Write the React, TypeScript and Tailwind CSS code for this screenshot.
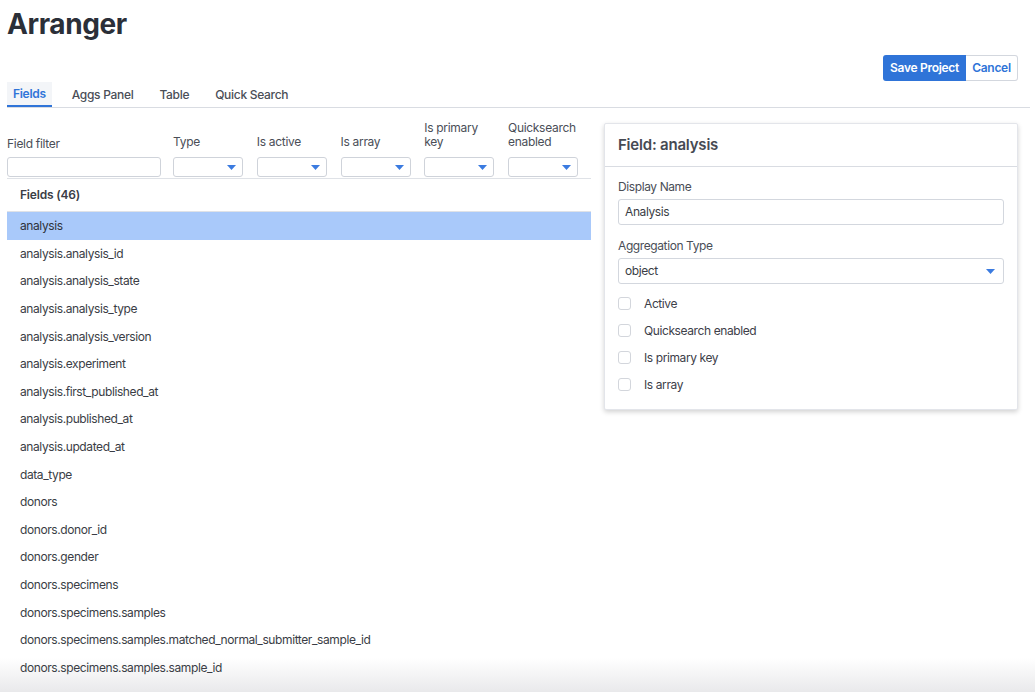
import React from 'react';

const fields = [
  'analysis',
  'analysis.analysis_id',
  'analysis.analysis_state',
  'analysis.analysis_type',
  'analysis.analysis_version',
  'analysis.experiment',
  'analysis.first_published_at',
  'analysis.published_at',
  'analysis.updated_at',
  'data_type',
  'donors',
  'donors.donor_id',
  'donors.gender',
  'donors.specimens',
  'donors.specimens.samples',
  'donors.specimens.samples.matched_normal_submitter_sample_id',
  'donors.specimens.samples.sample_id',
];

const Caret = () => (
  <svg width="9" height="5" viewBox="0 0 9 5" className="shrink-0">
    <path d="M0 0 L9 0 L4.5 5 Z" fill="#3b7be0" />
  </svg>
);

const FilterSelect = ({ label }: { label: React.ReactNode }) => (
  <div className="flex flex-col w-[70px]">
    <span className="text-[12px] leading-[14px] tracking-[-0.3px] text-[#4a4e57] mb-[8px]">{label}</span>
    <div className="h-[20px] border border-[#cfd3da] rounded-[3px] flex items-center justify-end pr-[6px]">
      <Caret />
    </div>
  </div>
);

const Check = ({ label }: { label: string }) => (
  <label className="flex items-center h-[27px]">
    <span className="w-[13px] h-[13px] border border-[#d3d6dc] rounded-[3px] bg-white" />
    <span className="ml-[13px] text-[12px] tracking-[-0.4px] text-[#3d4049]">{label}</span>
  </label>
);

const App: React.FC = () => {
  return (
    <div className="h-screen overflow-hidden bg-[linear-gradient(to_bottom,#ffffff_calc(100%-34px),#e9e9eb)] font-['Inter',sans-serif] text-[#3a3d45]">
      <div className="pl-[7px] pr-[5px]">
        <h1 className="pt-[6px] text-[28px] leading-[36px] font-bold text-[#2b2f38] tracking-[-0.4px]">Arranger</h1>

        <div className="flex justify-end pr-[12px] mt-[13px]">
          <button className="h-[26px] w-[83px] bg-[#2f74d8] text-white text-[12px] font-semibold tracking-[-0.3px] rounded-l-[3px]">
            Save Project
          </button>
          <button className="h-[26px] w-[52px] bg-white text-[#2f74d8] text-[12px] font-semibold tracking-[-0.3px] border border-l-0 border-[#d3d7de] rounded-r-[3px]">
            Cancel
          </button>
        </div>

        <div className="flex gap-[14px] border-b border-[#d9dce2] mt-[1px] text-[12px] tracking-[-0.3px]">
          <div className="px-[6px] h-[25px] flex items-center bg-[#f3f5f8] border-b-2 border-[#2f74d8] -mb-px font-semibold text-[#2f74d8]">
            Fields
          </div>
          <div className="px-[6px] h-[25px] flex items-center font-medium text-[#4a4e57]">Aggs Panel</div>
          <div className="px-[6px] h-[25px] flex items-center font-medium text-[#4a4e57]">Table</div>
          <div className="px-[6px] h-[25px] flex items-center font-medium text-[#4a4e57]">Quick Search</div>
        </div>
      </div>

      <div className="flex pl-[7px] gap-[13px]">
        <div className="w-[584px] shrink-0 pt-[13px]">
          <div className="flex items-end gap-[12px] border-b border-[#dfe2e7] pb-[1px]">
            <div className="flex flex-col w-[154px]">
              <span className="text-[12px] leading-[14px] tracking-[-0.3px] text-[#4a4e57] mb-[6px]">Field filter</span>
              <div className="h-[20px] border border-[#cfd3da] rounded-[3px]" />
            </div>
            <div className="flex items-end gap-[13.75px]">
              <FilterSelect label="Type" />
              <FilterSelect label="Is active" />
              <FilterSelect label="Is array" />
              <FilterSelect label={<>Is primary<br />key</>} />
              <FilterSelect label={<>Quicksearch<br />enabled</>} />
            </div>
          </div>

          <div className="h-[33px] flex items-center pl-[13px] text-[12px] font-semibold tracking-[-0.2px] text-[#3a3d45] border-b border-[#dfe2e7]">
            Fields (46)
          </div>

          <div>
            {fields.map((f, i) => (
              <div
                key={f}
                className={
                  i === 0
                    ? 'h-[28px] flex items-center pl-[13px] text-[12px] tracking-[-0.4px] bg-[#a9c9fa] text-[#2f333b]'
                    : 'h-[27.6px] flex items-center pl-[13px] text-[12px] tracking-[-0.4px] text-[#3a3d45]'
                }
              >
                {f}
              </div>
            ))}
          </div>
        </div>

        <div className="pt-[15px]">
          <div className="w-[414px] bg-white border border-[#e3e5ea] rounded-[2px] shadow-[0_2px_5px_rgba(0,0,0,0.18)]">
            <div className="h-[43px] flex items-center px-[13px] border-b border-[#d9dce2] text-[15px] font-semibold tracking-[-0.2px] text-[#464a53]">
              Field: analysis
            </div>
            <div className="px-[13px] pt-[12px] pb-[11px] text-[12px] tracking-[-0.4px]">
              <div className="leading-[16px] text-[#4a4e57]">Display Name</div>
              <div className="mt-[4px] h-[26px] border border-[#d3d7de] rounded-[3px] flex items-center px-[6px] text-[#3a3d45]">
                Analysis
              </div>
              <div className="mt-[13px] leading-[16px] text-[#4a4e57]">Aggregation Type</div>
              <div className="mt-[4px] h-[26px] border border-[#d3d7de] rounded-[3px] flex items-center justify-between pl-[6px] pr-[8px] text-[#3a3d45]">
                <span>object</span>
                <Caret />
              </div>
              <div className="mt-[6px]">
                <Check label="Active" />
                <Check label="Quicksearch enabled" />
                <Check label="Is primary key" />
                <Check label="Is array" />
              </div>
            </div>
          </div>
        </div>
      </div>
    </div>
  );
};

export default App;
